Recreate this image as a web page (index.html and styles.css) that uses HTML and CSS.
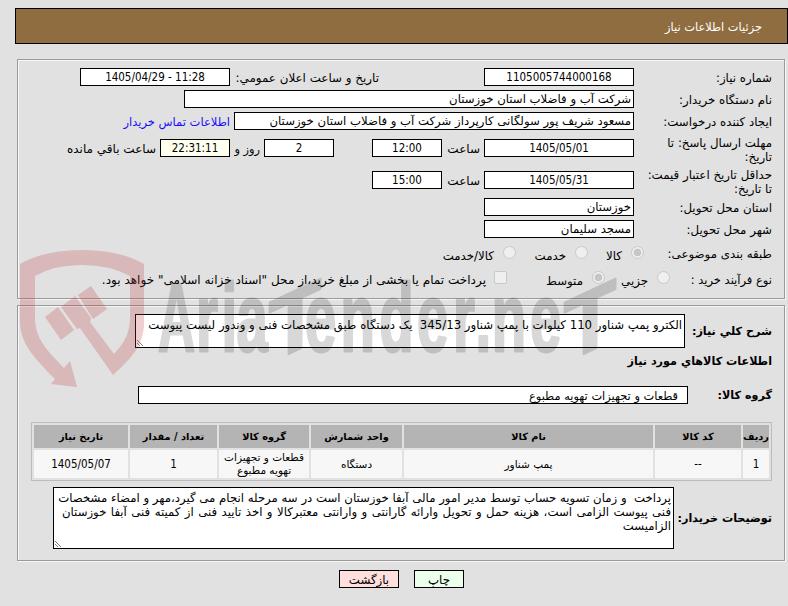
FILE: index.html
```html
<!DOCTYPE html>
<html lang="fa" dir="rtl">
<head>
<meta charset="utf-8">
<title>جزئیات اطلاعات نیاز</title>
<link rel="stylesheet" href="styles.css">
</head>
<body>
<header class="title-bar"><span>جزئیات اطلاعات نیاز</span></header>

<section class="panel panel-info">
  <div class="row r1"><label>شماره نیاز:</label><div class="box num w150">1105005744000168</div><span class="text announce">تاریخ و ساعت اعلان عمومي:</span><div class="box num w150">1405/04/29 - 11:28</div></div>
  <div class="row r2"><label>نام دستگاه خریدار:</label><div class="box w450">شرکت آب و فاضلاب استان خوزستان</div></div>
  <div class="row r3"><label>ایجاد کننده درخواست:</label><div class="box w400">مسعود شریف پور سولگانی کارپرداز شرکت آب و فاضلاب استان خوزستان</div><a class="text contact">اطلاعات تماس خریدار</a></div>
  <div class="row r4"><label>مهلت ارسال پاسخ: تا<br>تاریخ:</label><div class="box num w150">1405/05/01</div><span class="text hour">ساعت</span><div class="box num w70">12:00</div><div class="box num w70 days">2</div><span class="text and">روز و</span><div class="box num w70 timer">22:31:11</div><span class="text remain">ساعت باقي مانده</span></div>
  <div class="row r5"><label>حداقل تاریخ اعتبار قیمت:<br>تا تاریخ:</label><div class="box num w150">1405/05/31</div><span class="text hour">ساعت</span><div class="box num w70">15:00</div></div>
  <div class="row r6"><label>استان محل تحویل:</label><div class="box w150">خوزستان</div></div>
  <div class="row r7"><label>شهر محل تحویل:</label><div class="box w150">مسجد سلیمان</div></div>
  <div class="row r8"><label>طبقه بندی موضوعی:</label><i class="radio on"></i><span class="opt kala">کالا</span><i class="radio"></i><span class="opt service">خدمت</span><i class="radio"></i><span class="opt both">کالا/خدمت</span></div>
  <div class="row r9"><label>نوع فرآیند خرید :</label><i class="radio"></i><span class="opt minor">جزیي</span><i class="radio on"></i><span class="opt medium">متوسط</span><i class="check"></i><span class="opt treasury">پرداخت تمام یا بخشی از مبلغ خرید،از محل "اسناد خزانه اسلامی" خواهد بود.</span></div>
</section>

<section class="panel panel-goods">
  <div class="row desc"><b>شرح کلي نیاز:</b><div class="area area-desc">الکترو پمپ شناور 110 کیلوات با پمپ شناور 345/13 &nbsp;یک دستگاه طبق مشخصات فنی و وندور لیست پیوست<svg class="grip" viewBox="0 0 8 8"><path d="M1 1l6 6M1 4l3 3"/></svg></div></div>
  <h2>اطلاعات کالاهاي مورد نیاز</h2>
  <div class="row group"><b>گروه کالا:</b><div class="box w550">قطعات و تجهیزات تهویه مطبوع</div></div>
  <table>
    <colgroup><col class="c1"><col class="c2"><col class="c3"><col class="c4"><col class="c5"><col class="c6"><col class="c7"></colgroup>
    <tr><th>ردیف</th><th>کد کالا</th><th>نام کالا</th><th>واحد شمارش</th><th>گروه کالا</th><th>تعداد / مقدار</th><th>تاریخ نیاز</th></tr>
    <tr><td class="n">1</td><td class="n">--</td><td>پمپ شناور</td><td>دستگاه</td><td>قطعات و تجهیزات<br>تهویه مطبوع</td><td class="n">1</td><td class="n">1405/05/07</td></tr>
  </table>
  <div class="row notes"><b>توضیحات خریدار:</b><div class="area area-notes">پرداخت &nbsp;و زمان تسویه حساب توسط مدیر امور مالی آبفا خوزستان است در سه مرحله انجام می گیرد،مهر و امضاء مشخصات<br><span class="terms">فنی پیوست الزامی است، هزینه حمل و تحویل وارائه گارانتی و وارانتی معتبرکالا و اخذ تایید فنی از کمیته فنی آبفا خوزستان</span><br>الزامیست<svg class="grip" viewBox="0 0 8 8"><path d="M1 1l6 6M1 4l3 3"/></svg></div></div>
</section>

<footer><button class="print">چاپ</button><button class="back">بازگشت</button></footer>

<svg class="watermark" viewBox="0 0 620 150" direction="ltr">
  <g class="shield">
    <path d="M0 24Q24 10 62 10Q100 10 124 24V85C123 105 112 118 93 135L60 88L57 89L41 67L55 56L71 78L70 82L94 114C105 102 110 93 110 77V36Q90 25 62 25Q34 25 15 36V80C16 101 30 113 44 128L50 121L57 147L31 144L35 139C14 118 1 104 0 83Z"/>
    <path d="M25 77L38 67L54 90L41 100ZM58 55L71 46L87 69L73 79Z"/>
  </g>
  <g class="brand">
    <text transform="translate(138 111) scale(.53 1)">A</text>
    <text transform="translate(176 111) scale(.58 1)" x="0 44 70">ria</text>
    <text transform="translate(249 123) skewY(-25) scale(.88 .9)">T</text>
    <text transform="translate(285 111) scale(.58 1)" x="0 61 128 193 255 294 322 388">ender.ne</text>
    <text transform="translate(544 123) skewY(-25) scale(.88 .9)">T</text>
  </g>
</svg>
</body>
</html>
```
FILE: styles.css
```css
* { box-sizing: border-box; }
body { margin: 0; width: 788px; height: 606px; overflow: hidden; position: relative; background: #e1e1e1; color: #000; font: 11.8px/14px "DejaVu Sans", sans-serif; padding-top: 8px; }
.title-bar { width: 773px; height: 36px; border: 1px solid #000; background: #8f6d40; color: #fff; padding: 11px 25px 0 0; font-size: 11.4px; }
.panel { width: 768px; margin-right: 3px; border: 1px solid #9a9a9a; box-shadow: inset 1px 1px #f6f6f6, 1px 1px #f6f6f6; padding: 0 12px 0 0; }
.panel-info { margin-top: 15px; height: 240px; padding-top: 8px; }
.panel-goods { margin-top: 6px; height: 256px; padding-top: 8px; }
.row { display: flex; white-space: nowrap; align-items: flex-start; }
label { width: 138px; flex: none; padding-top: 3px; font-size: 11.8px; }
.box { flex: none; height: 18px; border: 1px solid #000; background: #fff; padding: 1px 2px 0; line-height: 14px; font-size: 11.7px; }
.num, .n { direction: ltr; text-align: center; font-family: "DejaVu Sans Condensed", "DejaVu Sans", sans-serif; font-stretch: condensed; font-size: 11.5px; }
.w70 { width: 70px; } .w150 { width: 150px; } .w400 { width: 400px; } .w450 { width: 450px; } .w550 { width: 550px; }
.text { flex: none; padding-top: 3px; }
.r1, .r2 { height: 22px; }
.announce { width: 254px; padding-right: 105px; font-size: 11.9px; }
.r3 { height: 25px; }
.contact { color: #1a0dff; padding-right: 4px; font-size: 11.5px; }
.r4 { height: 32px; }
.r4 .box, .r5 .box { margin-top: 2px; }
.r4 label, .r5 label { padding-top: 0; margin-top: -1px; }
.r4 .text, .r5 .text { padding-top: 5px; }
.hour { width: 42px; padding-right: 4px; font-size: 12px; }
.days { margin-right: 38px; }
.and { width: 34px; padding-right: 4px; font-size: 11.4px; }
.timer { background: #ffffef; }
.remain { padding-right: 4px; font-size: 12px; }
.r5 { height: 29px; }
.r6 { height: 22px; }
.r7 { height: 24px; }
.r8, .r9 { height: 25px; }
.r8 label { width: 128px; padding-top: 3px; }
.r9 label { width: 102px; padding-top: 4px; font-size: 11.5px; }
.radio, .check { flex: none; width: 13px; height: 13px; border: 1px solid #c9c9c9; background: #efefef; border-radius: 50%; margin-top: 2px; }
.check { border-radius: 2px; }
.on { background: radial-gradient(circle, #c6c6c6 0 3.5px, #efefef 4.2px); }
.opt { flex: none; padding-top: 5px; }
.kala { width: 43px; padding-right: 9px; }
.service { width: 59px; padding-right: 9px; }
.both { padding-right: 9px; }
.minor { width: 52px; padding-right: 9px; }
.medium { width: 85px; padding-right: 9px; }
.treasury { padding: 4px 8px 0 0; font-size: 12.05px; }
b, h2, th { font-weight: bold; }
b, h2 { font-size: 11.2px; }
.desc b { width: 87px; padding-top: 11px; }
.area { flex: none; position: relative; border: 1px solid #000; background: #fff; padding: 3px 2px; font-size: 11.72px; }
.area-desc { width: 550px; height: 34px; }
.area-notes { width: 621px; height: 62px; }
.terms { font-size: 11.72px; word-spacing: .72px; }
.grip { position: absolute; left: 0; bottom: 0; width: 8px; height: 8px; fill: none; stroke: #444; stroke-width: .7; }
h2 { line-height: 14px; margin: 7px 0 0; }
.group { margin-top: 17px; }
.group b { width: 84px; padding-top: 3px; }
.group .box { padding: 2px 9px 0 0; font-size: 11.4px; }
table { width: 741px; height: 59px; margin: 18px 0 0; border: 1px solid #bcbcbc; border-collapse: separate; border-spacing: 2px; table-layout: fixed; font-size: 10.5px; line-height: 13px; }
th { height: 23px; background: #b4b4b4; padding: 0; font-size: 9.8px; }
td { height: 28px; background: #f7f7f7; padding: 0; text-align: center; }
.c1 { width: 26px; } .c2 { width: 86px; } .c3 { width: 249px; } .c4 { width: 91px; } .c5 { width: 90px; } .c6 { width: 87px; }
.notes { margin-top: 6px; }
.notes b { width: 98px; padding-top: 25px; }
footer { display: flex; gap: 15px; margin-top: 9px; padding-right: 324px; }
button { height: 18px; border: 1px solid #000; font: inherit; padding: 1px 0 0; }
.print { width: 50px; background: #ecffec; }
.back { width: 60px; background: #ffdede; }
.watermark { position: absolute; left: 20px; top: 240px; width: 620px; height: 150px; pointer-events: none; }
.shield { fill: #c0393f; opacity: .24; }
.brand { fill: #000; stroke: #000; stroke-width: 3; stroke-linejoin: round; opacity: .15; font: bold 97px "Liberation Sans", sans-serif; }
```
